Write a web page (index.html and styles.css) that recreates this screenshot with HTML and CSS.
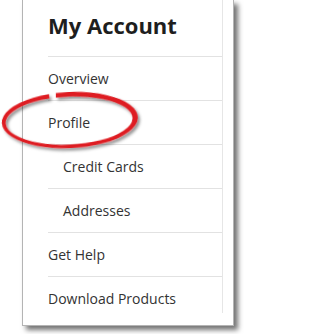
FILE: index.html
```html
<!DOCTYPE html>
<html>
<head>
<meta charset="utf-8">
<link rel="stylesheet" href="styles.css">
</head>
<body>
<div class="card">
  <div class="panel">
    <h2 class="title">My Account</h2>
    <ul class="menu">
      <li class="item">Overview</li>
      <li class="item">Profile</li>
      <li class="item sub">Credit Cards</li>
      <li class="item sub">Addresses</li>
      <li class="item">Get Help</li>
      <li class="item last">Download Products</li>
    </ul>
  </div>
</div>
<svg class="mark" width="244" height="334" viewBox="0 0 244 334" xmlns="http://www.w3.org/2000/svg">
  <defs>
    <filter id="sh" x="-10%" y="-20%" width="120%" height="140%">
      <feDropShadow dx="2" dy="2.5" stdDeviation="1.6" flood-color="#000" flood-opacity="0.45"/>
    </filter>
  </defs>
  <g transform="rotate(-2.5 70 120)" filter="url(#sh)">
    <path fill="#de1a20" d="M 57.03 92.52 A 68 28 0 1 1 50.12 93.22 L 50.43 97.55 A 63.5 24 0 1 0 56.88 96.94 Z"/>
  </g>
</svg>
</body>
</html>
```
FILE: styles.css
```css
html, body {
  margin: 0;
  padding: 0;
  background: #fff;
}
body {
  width: 244px;
  height: 334px;
  overflow: hidden;
  position: relative;
  font-family: "Open Sans", "Liberation Sans", sans-serif;
}
.card {
  box-sizing: border-box;
  margin-left: 22px;
  width: 212px;
  height: 326px;
  padding: 0 0 12px 25px;
  border: 1px solid #b4b4b4;
  border-top: none;
  background: #fff;
  box-shadow: 4px 4px 5px rgba(0, 0, 0, 0.55);
}
.panel {
  box-sizing: border-box;
  width: 175px;
  height: 313px;
  border-right: 1px solid #e6e6e6;
}
.title {
  margin: 0;
  padding: 10px 0 16px;
  font-size: 22px;
  line-height: 30px;
  font-weight: 700;
  color: #1e1e1e;
  border-bottom: 1px solid #e2e2e2;
}
.menu {
  list-style: none;
  margin: 0;
  padding: 0;
}
.item {
  height: 43px;
  line-height: 43px;
  font-size: 14px;
  color: #333;
  border-bottom: 1px solid #e2e2e2;
  white-space: nowrap;
}
.sub {
  padding-left: 15px;
}
.last {
  height: 36px;
  border-bottom: none;
}
.mark {
  position: absolute;
  left: 0;
  top: 0;
  pointer-events: none;
}
```
